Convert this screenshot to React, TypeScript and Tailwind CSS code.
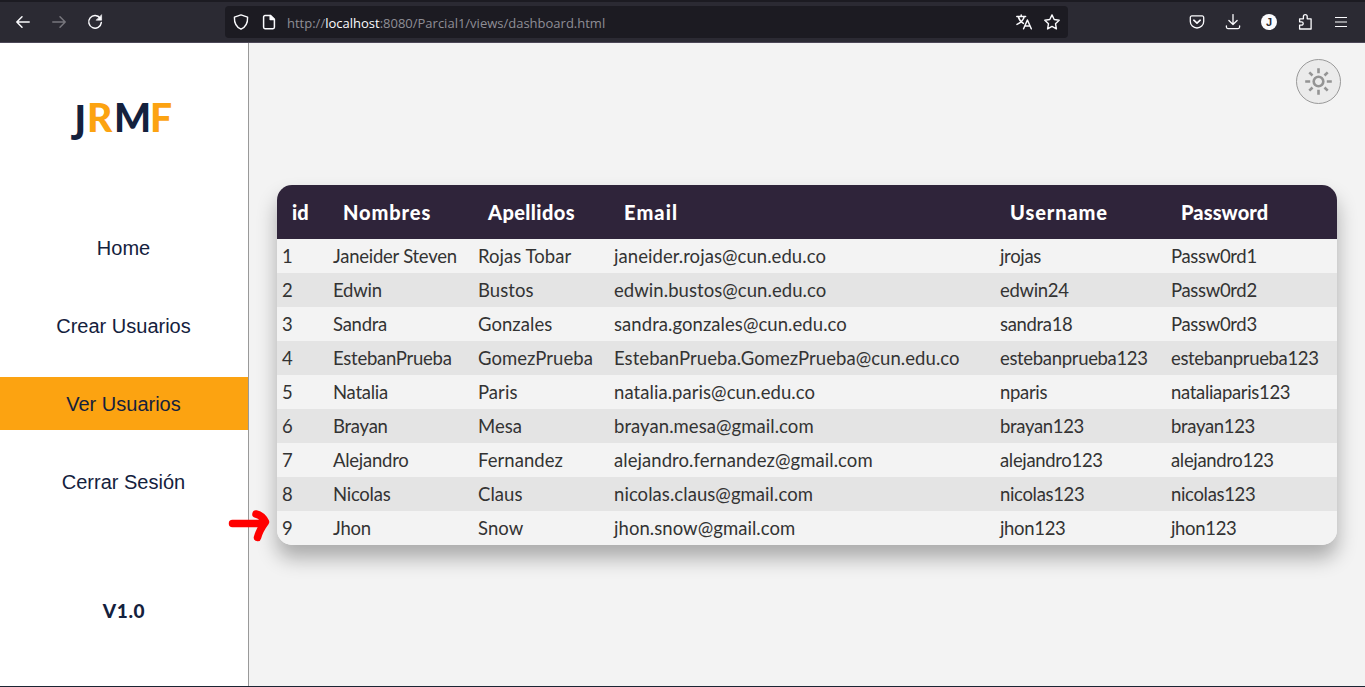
type Column = { label: string; th: string; td: string };

const columns: Column[] = [
  { label: 'id', th: 'tracking-normal', td: 'tracking-normal' },
  { label: 'Nombres', th: 'tracking-[0.9px]', td: 'tracking-[-0.25px]' },
  { label: 'Apellidos', th: 'tracking-[0.4px]', td: 'tracking-[0.05px]' },
  { label: 'Email', th: 'tracking-[1.1px]', td: 'tracking-[0.06px]' },
  { label: 'Username', th: 'tracking-[0.9px]', td: 'tracking-[-0.33px]' },
  { label: 'Password', th: 'tracking-[0.1px]', td: 'tracking-[-0.33px]' },
];

const users: string[][] = [
  ['1', 'Janeider Steven', 'Rojas Tobar', 'janeider.rojas@cun.edu.co', 'jrojas', 'Passw0rd1'],
  ['2', 'Edwin', 'Bustos', 'edwin.bustos@cun.edu.co', 'edwin24', 'Passw0rd2'],
  ['3', 'Sandra', 'Gonzales', 'sandra.gonzales@cun.edu.co', 'sandra18', 'Passw0rd3'],
  ['4', 'EstebanPrueba', 'GomezPrueba', 'EstebanPrueba.GomezPrueba@cun.edu.co', 'estebanprueba123', 'estebanprueba123'],
  ['5', 'Natalia', 'Paris', 'natalia.paris@cun.edu.co', 'nparis', 'nataliaparis123'],
  ['6', 'Brayan', 'Mesa', 'brayan.mesa@gmail.com', 'brayan123', 'brayan123'],
  ['7', 'Alejandro', 'Fernandez', 'alejandro.fernandez@gmail.com', 'alejandro123', 'alejandro123'],
  ['8', 'Nicolas', 'Claus', 'nicolas.claus@gmail.com', 'nicolas123', 'nicolas123'],
  ['9', 'Jhon', 'Snow', 'jhon.snow@gmail.com', 'jhon123', 'jhon123'],
];

const grid = 'grid grid-cols-[51px_145px_136px_386px_171px_171px] items-center';

const icon = {
  width: 16,
  height: 16,
  viewBox: '0 0 16 16',
  fill: 'none',
  stroke: 'currentColor',
  strokeWidth: 1.3,
  strokeLinecap: 'round' as const,
  strokeLinejoin: 'round' as const,
};

function Toolbar() {
  return (
    <header className="flex h-[43px] shrink-0 items-center border-t-2 border-b border-t-[#1c1b22] border-b-[#4c4757] bg-[#2b2a33] pr-[16px] pl-[15px] text-[#fbfbfe]">
      <nav className="flex w-[210px] gap-[20px]">
        <svg {...icon} strokeWidth={1.5}><path d="M14.2 8H1.8M7 2.8 1.8 8 7 13.2" /></svg>
        <svg {...icon} strokeWidth={1.5} className="text-[#77767d]"><path d="M1.8 8h12.4M9 2.8 14.2 8 9 13.2" /></svg>
        <svg {...icon} strokeWidth={1.5}>
          <path d="M13.2 4.2A6.3 6.3 0 1 0 14.3 8.6" />
          <path d="M14.6 1v5.2H9.4z" fill="currentColor" strokeWidth={0.6} />
        </svg>
      </nav>
      <div className="flex h-8 w-[843px] items-center rounded bg-[#1c1b22] px-2">
        <svg {...icon} strokeWidth={1.4}><path d="M8 .9 14.6 3.2C14.8 8.5 12.8 13 8 15.2 3.2 13 1.2 8.5 1.4 3.2Z" /></svg>
        <svg {...icon} strokeWidth={1.5} className="ml-3">
          <path d="M9.5 1.5H4a1.4 1.4 0 0 0-1.4 1.4v10.4A1.4 1.4 0 0 0 4 14.7h8a1.4 1.4 0 0 0 1.4-1.4V5.4z" />
          <path d="M9.2 1.6v3.9h4z" fill="currentColor" />
        </svg>
        <span className="ml-[10px] pt-[4px] font-['Open_Sans',sans-serif] text-[13px] text-[#8f8e96]">
          http://<span className="text-[#fbfbfe]">localhost</span>:8080/Parcial1/views/dashboard.html
        </span>
        <svg {...icon} className="ml-auto" strokeWidth={1.5}>
          <path d="M.8 2.6h8.8M5.2 1v1.6M2.4 3c.8 3 3.2 5.4 5 6.4M8.2 2.8C7.4 6 4.6 8.8 1 10.4" />
          <path d="m7.6 14.8 3.8-8.8 3.9 8.8M9 12h4.8" />
        </svg>
        <svg {...icon} strokeWidth={1.4} className="ml-3"><path d="m8 .9 2.2 4.6 5 .7-3.7 3.5.9 5.2L8 12.4l-4.4 2.5.9-5.2L.8 6.2l5-.7z" /></svg>
      </div>
      <div className="ml-auto flex gap-[20px]">
        <svg {...icon}>
          <path d="M2.8 1.9h10.400a1.500 1.500 0 0 1 1.500 1.500v4a6.700 6.600 0 0 1-13.400 0v-4a1.500 1.500 0 0 1 1.500-1.500Z" />
          <path d="m4.800 6.200 3.200 3 3.200-3" strokeWidth={1.6} />
        </svg>
        <svg {...icon}><path d="M8 .6v9.8M3.9 6.5 8 10.5l4.1-4M1.4 11.8v1.3c0 .9.7 1.5 1.5 1.5h10.2c.9 0 1.5-.6 1.5-1.5v-1.3" /></svg>
        <span className="flex size-4 items-center justify-center rounded-full bg-[#fbfbfe]">
          <svg width="16" height="16" viewBox="0 0 16 16" className="text-[#2b2a33]">
            <text x="8" y="11.8" textAnchor="middle" fontSize="11" fill="currentColor" className="font-['Liberation_Sans',sans-serif] font-bold">J</text>
          </svg>
        </span>
        <svg {...icon} className="ml-px">
          <path d="M1.600 15V11.200h1.900a1.700 1.700 0 0 0 0-3.400H1.600V4.800h3.800V2.600a1.900 1.900 0 0 1 3.800 0v2.200h3.900V15z" />
        </svg>
        <svg {...icon} strokeWidth={1.2} strokeLinecap="butt" className="-ml-px"><path d="M2 3.5h12M2 8h12M2 12.5h12" /></svg>
      </div>
    </header>
  );
}

function Sidebar() {
  const links = ['Home', 'Crear Usuarios', 'Ver Usuarios', 'Cerrar Sesión'];
  return (
    <aside className="flex w-[249px] shrink-0 flex-col border-r border-[#999] bg-white text-[#14213d]">
      <h1 className="mt-[49px] flex h-[50px] items-baseline pl-[74px] font-['Lato',sans-serif] text-[39px] leading-[50px] font-black">
        <span className="w-[13px] font-['Noto_Sans',sans-serif] text-[38px] leading-[46px] font-bold">J</span>
        <span className="w-[27px] text-[#fca311]">R</span>
        <span className="w-[36px]">M</span>
        <span className="text-[#fca311]">F</span>
      </h1>
      <ul className="mt-[79px] flex flex-col gap-[25px] font-['Liberation_Sans',sans-serif] text-[20px]">
        {links.map((link) => (
          <li
            key={link}
            className={`flex h-[53px] items-center justify-center pr-px ${link === 'Ver Usuarios' ? 'bg-[#fca311]' : ''}`}
          >
            {link}
          </li>
        ))}
      </ul>
      <p className="mt-[89px] text-center font-['Lato',sans-serif] text-[19px] leading-[28px] font-black tracking-[0.7px]">V1.0</p>
    </aside>
  );
}

function UsersTable() {
  return (
    <section className="mt-[81px] ml-[28px] w-[1060px] overflow-hidden rounded-[15px] font-['Lato',sans-serif] shadow-[0_13px_20px_rgba(0,0,0,0.3)]">
      <div className={`${grid} h-[54px] bg-[#2f243a] text-[20px] font-black text-white`}>
        {columns.map((c) => (
          <span key={c.label} className={`pl-[15px] ${c.th}`}>{c.label}</span>
        ))}
      </div>
      {users.map((row) => (
        <div key={row[0]} className={`${grid} h-[34px] pt-[2px] text-[18.5px] text-[#333] odd:bg-[#e4e4e4] even:bg-[#f3f3f3]`}>
          {row.map((cell, i) => (
            <span key={i} className={`pl-[5px] ${columns[i].td}`}>{cell}</span>
          ))}
        </div>
      ))}
    </section>
  );
}

export default function App() {
  return (
    <div className="relative flex h-[687px] w-[1365px] flex-col overflow-hidden border-b border-[#1b2533] bg-[#f3f3f3]">
      <Toolbar />
      <div className="flex min-h-0 flex-1">
        <Sidebar />
        <main className="flex flex-1 flex-col">
          <button className="mt-4 mr-6 flex size-[45px] items-center justify-center self-end rounded-full border border-[#999] bg-[#ebebeb] text-[#949494]">
            <svg width="28" height="28" viewBox="-13.5 -13.5 28 28" fill="none" stroke="currentColor" strokeWidth="2.6">
              <circle r="4.8" />
              <path d="M0-13.3v5M0 8.3v5M-13.3 0h5M8.3 0h5M-9.2-9.2l3.2 3.2M6 6l3.2 3.2M9.2-9.2 6-6M-6 6l-3.2 3.2" />
            </svg>
          </button>
          <UsersTable />
        </main>
      </div>
      <svg className="absolute top-[506px] left-[226px]" width="48" height="40" viewBox="0 0 48 40" fill="none" stroke="#f00" strokeWidth="7.5" strokeLinecap="round" strokeLinejoin="round">
        <path d="M6.5 17.5H37M30 8c4.5 1 7.5 4 9.5 8-3 4-6 8-8 15.5" />
      </svg>
    </div>
  );
}
